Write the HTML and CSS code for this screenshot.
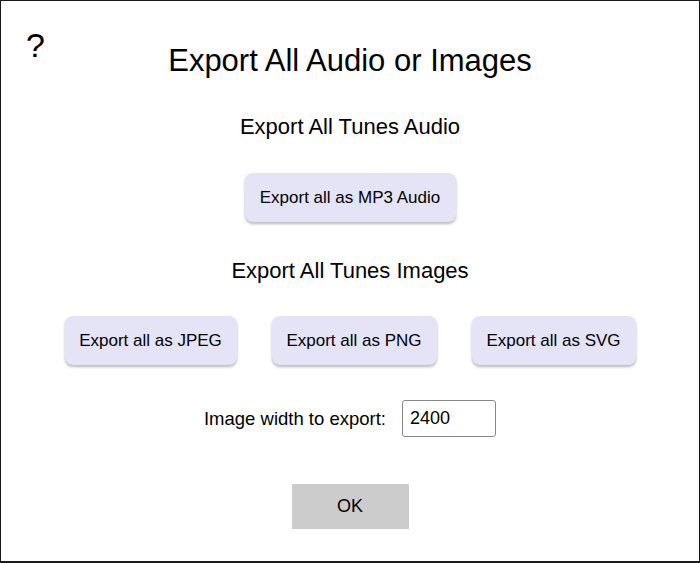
FILE: index.html
```html
<!DOCTYPE html>
<html>
<head>
<meta charset="utf-8">
<link rel="stylesheet" href="styles.css">
</head>
<body>
<div class="dialog">
  <div class="help">?</div>
  <h1 class="title">Export All Audio or Images</h1>
  <h2 class="section">Export All Tunes Audio</h2>
  <div class="row row-audio">
    <button class="btn btn-mp3">Export all as MP3 Audio</button>
  </div>
  <h2 class="section section-images">Export All Tunes Images</h2>
  <div class="row row-images">
    <button class="btn btn-jpeg">Export all as JPEG</button>
    <button class="btn btn-png">Export all as PNG</button>
    <button class="btn btn-svg">Export all as SVG</button>
  </div>
  <div class="row row-width">
    <label class="width-label" for="w">Image width to export:</label>
    <input id="w" class="width-input" type="text" value="2400">
  </div>
  <div class="row row-ok">
    <button class="ok">OK</button>
  </div>
</div>
</body>
</html>
```
FILE: styles.css
```css
html, body {
  margin: 0;
  padding: 0;
  background: #fff;
}
body {
  font-family: "Liberation Sans", Arial, sans-serif;
  color: #000;
}
.dialog {
  position: relative;
  box-sizing: border-box;
  width: 700px;
  height: 563px;
  border: 1px solid #1a1a1a;
  border-bottom-width: 2px;
  display: flex;
  flex-direction: column;
  align-items: center;
}
.help {
  position: absolute;
  left: 25px;
  top: 24px;
  font-size: 34px;
  line-height: 40px;
}
.title {
  margin: 43px 0 0 0;
  font-size: 31px;
  font-weight: normal;
  line-height: 34px;
}
.section {
  margin: 36px 0 0 0;
  font-size: 22px;
  font-weight: normal;
  line-height: 26px;
}
.section-images {
  margin-top: 36px;
}
.row {
  display: flex;
  justify-content: center;
  align-items: center;
}
.row-audio {
  margin-top: 33px;
}
.row-images {
  margin-top: 32px;
  gap: 35px;
}
.btn {
  font-family: "Liberation Sans", Arial, sans-serif;
  font-size: 17px;
  color: #000;
  background: #e4e4f6;
  border: none;
  border-radius: 8px;
  height: 49px;
  padding: 0 12px;
  box-shadow: 0 2px 3px rgba(0, 0, 0, 0.28);
}
.btn-mp3 { width: 211px; }
.btn-jpeg { width: 172px; }
.btn-png { width: 165px; }
.btn-svg { width: 164px; }
.row-width {
  margin-top: 35px;
  gap: 16px;
}
.width-label {
  font-size: 18.5px;
}
.width-input {
  box-sizing: border-box;
  width: 94px;
  height: 37px;
  border: 1px solid #888;
  border-radius: 3px;
  font-family: "Liberation Sans", Arial, sans-serif;
  font-size: 18px;
  padding: 0 7px;
  color: #000;
  outline: none;
}
.row-ok {
  margin-top: 47px;
}
.ok {
  width: 117px;
  height: 45px;
  border: none;
  background: #cccccc;
  font-family: "Liberation Sans", Arial, sans-serif;
  font-size: 18px;
  color: #000;
}
```
